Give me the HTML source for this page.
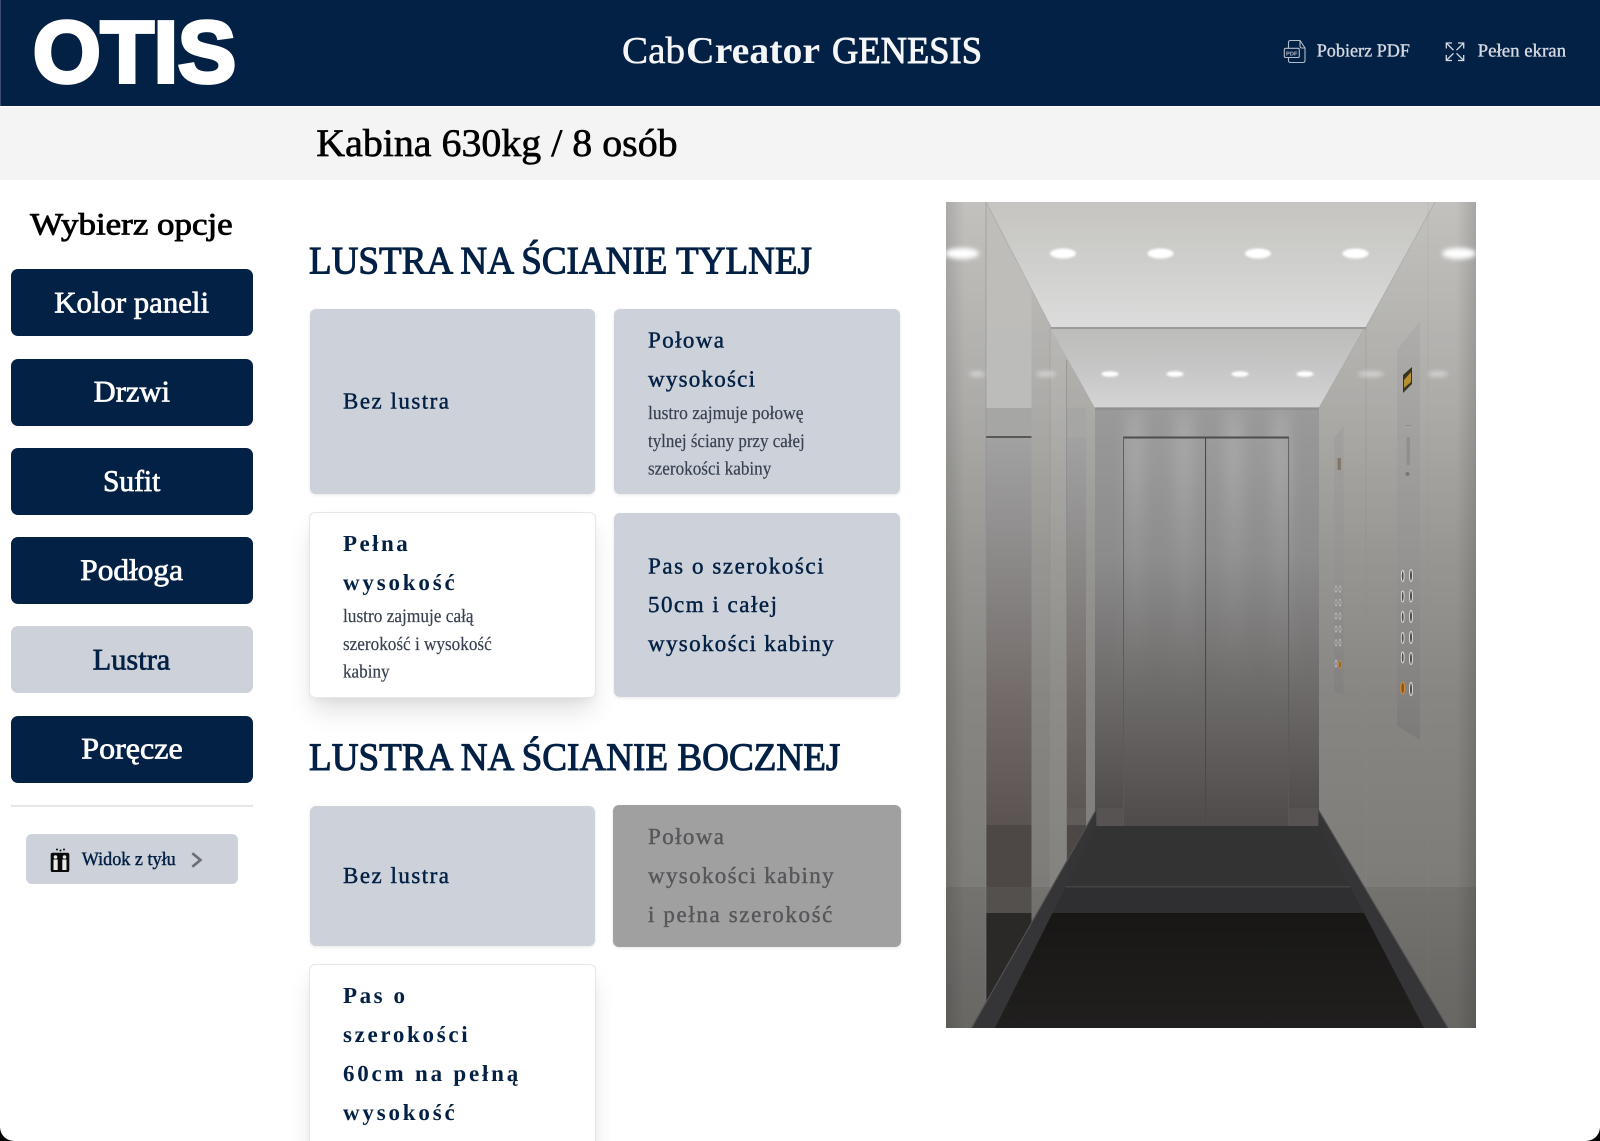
<!DOCTYPE html>
<html lang="pl"><head><meta charset="utf-8"><title>CabCreator GENESIS</title>
<style>
html,body{margin:0;padding:0;width:1600px;height:1141px;overflow:hidden;background:#000}
#page{position:absolute;left:0;top:0;width:1600px;height:1141px;background:#fff;overflow:hidden;border-radius:0 0 14px 14px}
.b{position:absolute;box-sizing:border-box}
.hdr{left:0;top:0;width:1600px;height:106px;background:#032045;border-left:1px solid #3a4f6f}
.sub{left:0;top:107px;width:1600px;height:73px;background:#f4f4f4}
.btn{left:11px;width:241.5px;height:67px;background:#032045;border-radius:7px}
.on{background:#cdd2da}
.card{background:#cdd2da;border-radius:6px;box-shadow:0 1px 3px rgba(0,0,0,.1)}
.sel{background:#fff;border:1px solid #e5e7eb;border-radius:6px;box-shadow:0 16px 26px -4px rgba(0,0,0,.13),0 4px 10px -2px rgba(0,0,0,.05)}
.dis{background:#a0a0a0;border-radius:6px;box-shadow:0 1px 3px rgba(0,0,0,.1)}
svg.o{position:absolute;left:0;top:0;width:1600px;height:1141px;overflow:hidden}
text{font-family:"Liberation Serif",serif;text-rendering:geometricPrecision}
.n{fill:#032045}
.m{stroke:#032045;stroke-width:.45}
.w{fill:#fff;font-size:30px;stroke:#fff;stroke-width:.7}
.t{font-size:23px;fill:#032045;stroke:#032045;stroke-width:.45}
.tb{font-size:23px;font-weight:bold;fill:#032045}
.s{font-size:19px;fill:#374050;stroke:#374050;stroke-width:.2}
.g{font-size:23px;fill:#56575a;stroke:#56575a;stroke-width:.4}
.h{font-size:39px;fill:#032045;stroke:#032045;stroke-width:1.05}
</style></head><body><div id="page">
<div class="b hdr"></div>
<div class="b sub"></div>
<div class="b btn" style="top:269px"></div>
<div class="b btn" style="top:358.5px"></div>
<div class="b btn" style="top:447.5px"></div>
<div class="b btn" style="top:537px"></div>
<div class="b btn on" style="top:626px"></div>
<div class="b btn" style="top:715.5px"></div>
<div class="b" style="left:11px;top:805px;width:241.5px;height:1.5px;background:#e5e7eb"></div>
<div class="b" style="left:26px;top:834px;width:212px;height:50px;background:#cdd2da;border-radius:6px"></div>
<div class="b card" style="left:309.5px;top:309px;width:285.5px;height:185px"></div>
<div class="b card" style="left:614px;top:309px;width:285.5px;height:185px"></div>
<div class="b sel" style="left:309px;top:512px;width:287px;height:186px"></div>
<div class="b card" style="left:614px;top:513px;width:285.5px;height:184px"></div>
<div class="b card" style="left:309.5px;top:806px;width:285.5px;height:140px"></div>
<div class="b dis" style="left:613px;top:804.5px;width:288px;height:142.5px"></div>
<div class="b sel" style="left:309px;top:964px;width:287px;height:240px"></div>

<svg class="o" viewBox="0 0 1600 1141" xmlns="http://www.w3.org/2000/svg">
<defs>
<linearGradient id="st" gradientUnits="userSpaceOnUse" x1="0" y1="202" x2="0" y2="1028"><stop offset="0" stop-color="#c2c1be"/><stop offset=".24" stop-color="#adacA9"/><stop offset=".43" stop-color="#979692"/><stop offset=".6" stop-color="#888682"/><stop offset=".83" stop-color="#7e7c78"/><stop offset="1" stop-color="#716f6b"/></linearGradient>
<linearGradient id="bk" gradientUnits="userSpaceOnUse" x1="0" y1="408" x2="0" y2="826"><stop offset="0" stop-color="#9a9a9a"/><stop offset=".35" stop-color="#8c8c8c"/><stop offset=".7" stop-color="#6b6867"/><stop offset="1" stop-color="#4c4847"/></linearGradient>
<linearGradient id="dr" gradientUnits="userSpaceOnUse" x1="0" y1="437" x2="0" y2="826"><stop offset="0" stop-color="#a0a0a0"/><stop offset=".33" stop-color="#8c8c8c"/><stop offset=".64" stop-color="#6e6c6b"/><stop offset="1" stop-color="#524e4d"/></linearGradient>
<linearGradient id="rf" gradientUnits="userSpaceOnUse" x1="0" y1="437" x2="0" y2="826"><stop offset="0" stop-color="#a2a2a2"/><stop offset=".4" stop-color="#868282"/><stop offset=".68" stop-color="#726a68"/><stop offset="1" stop-color="#5a5352"/></linearGradient>
<linearGradient id="c1" gradientUnits="userSpaceOnUse" x1="0" y1="202" x2="0" y2="327"><stop offset="0" stop-color="#c5c4c0"/><stop offset=".5" stop-color="#cfcfcd"/><stop offset="1" stop-color="#dcdcdc"/></linearGradient>
<linearGradient id="c2" gradientUnits="userSpaceOnUse" x1="0" y1="328" x2="0" y2="408"><stop offset="0" stop-color="#bcbcba"/><stop offset=".5" stop-color="#c6c6c6"/><stop offset="1" stop-color="#d4d4d4"/></linearGradient>
<linearGradient id="vl" gradientUnits="userSpaceOnUse" x1="946" y1="0" x2="965" y2="0"><stop offset="0" stop-color="#000" stop-opacity=".12"/><stop offset="1" stop-color="#000" stop-opacity="0"/></linearGradient>
<linearGradient id="vr" gradientUnits="userSpaceOnUse" x1="1456" y1="0" x2="1476" y2="0"><stop offset="0" stop-color="#000" stop-opacity="0"/><stop offset="1" stop-color="#000" stop-opacity=".14"/></linearGradient>
<linearGradient id="fl" gradientUnits="userSpaceOnUse" x1="0" y1="913" x2="0" y2="1028"><stop offset="0" stop-color="#181716"/><stop offset="1" stop-color="#201f1e"/></linearGradient>
<linearGradient id="band" gradientUnits="userSpaceOnUse" x1="0" y1="380" x2="0" y2="700"><stop offset="0" stop-color="#fff" stop-opacity="0"/><stop offset=".25" stop-color="#fff" stop-opacity=".22"/><stop offset=".55" stop-color="#fff" stop-opacity=".09"/><stop offset="1" stop-color="#fff" stop-opacity="0"/></linearGradient>
<linearGradient id="cop" gradientUnits="userSpaceOnUse" x1="0" y1="330" x2="0" y2="740"><stop offset="0" stop-color="#adacaa"/><stop offset=".57" stop-color="#949391"/><stop offset="1" stop-color="#7c7b79"/></linearGradient>
<filter id="b1" x="-50%" y="-100%" width="200%" height="300%"><feGaussianBlur stdDeviation="1"/></filter>
<filter id="b2" x="-50%" y="-100%" width="200%" height="300%"><feGaussianBlur stdDeviation="2.5"/></filter>
<filter id="b6" x="-100%" y="-50%" width="300%" height="200%"><feGaussianBlur stdDeviation="6"/></filter>
<clipPath id="ci"><rect x="946" y="202" width="530" height="826"/></clipPath>
</defs>
<g clip-path="url(#ci)">
<rect x="946" y="202" width="530" height="826" fill="url(#st)"/>
<!-- left reflections -->
<rect x="986" y="202" width="45.5" height="125" fill="#bebdba"/>
<rect x="986" y="327" width="45.5" height="81" fill="#bcbcbb"/>
<rect x="986" y="408" width="45.5" height="29" fill="#a6a6a5"/>
<rect x="986" y="437" width="45.5" height="389" fill="url(#rf)"/>
<rect x="986" y="825" width="45.5" height="62" fill="#4d4846"/>
<rect x="986" y="887" width="45.5" height="26" fill="#5a5754"/>
<rect x="986" y="913" width="45.5" height="115" fill="#2f2d2c"/>
<rect x="986" y="436" width="45.5" height="2" fill="#5a5855"/>
<rect x="1050" y="328" width="16.7" height="560" fill="#fff" opacity=".05"/>
<rect x="1066.7" y="408" width="19.3" height="30" fill="#a6a6a5"/>
<rect x="1066.7" y="437" width="19.3" height="389" fill="url(#rf)"/>
<rect x="1066.7" y="808" width="19.3" height="17" fill="#615c5a"/>
<rect x="1066.7" y="825" width="19.3" height="40" fill="#4d4846"/>
<line x1="1050" y1="327" x2="1050" y2="890" stroke="#8a8986" stroke-width=".7" opacity=".5"/>
<line x1="1066.7" y1="360" x2="1066.7" y2="860" stroke="#7d7c79" stroke-width=".7" opacity=".7"/>
<line x1="986" y1="202" x2="986" y2="1005" stroke="#8f8e8b" stroke-width=".8" opacity=".7"/>
<!-- back wall -->
<rect x="1095" y="408" width="224" height="418" fill="url(#bk)"/>
<g filter="url(#b6)">
<rect x="1126" y="408" width="18" height="290" fill="url(#band)"/>
<rect x="1174" y="408" width="20" height="290" fill="url(#band)"/>
<rect x="1224" y="408" width="20" height="290" fill="url(#band)"/>
<rect x="1272" y="408" width="18" height="290" fill="url(#band)"/>
</g>
<rect x="1123" y="437" width="166" height="389" fill="url(#dr)" opacity=".45"/>
<rect x="1123" y="436.5" width="166" height="2" fill="#4e4e4e"/>
<rect x="1205" y="437" width="1.1" height="389" fill="#4a4a4a"/>
<rect x="1123" y="437" width=".9" height="389" fill="#5a5a5a"/>
<rect x="1288.2" y="437" width=".9" height="389" fill="#5a5a5a"/>
<rect x="1097" y="808" width="26" height="18" fill="#565352"/>
<rect x="1289" y="808" width="29" height="18" fill="#565352"/>
<!-- ceilings -->
<polygon points="986,202 1435,202 1366,327 1051,327" fill="url(#c1)"/>
<polygon points="1051,327 1366,327 1366,329 1051,329" fill="#9a9a97"/>
<polygon points="1051,329 1364,329 1319,408 1095,408" fill="url(#c2)"/>
<polygon points="1095,407 1319,407 1319,410 1095,410" fill="#8a8a88" opacity=".6"/>
<!-- right wall lines -->
<line x1="1366" y1="327" x2="1366" y2="887" stroke="#8b8a87" stroke-width=".7" opacity=".5"/>
<line x1="1428" y1="202" x2="1428" y2="1028" stroke="#8b8a87" stroke-width=".7" opacity=".22"/>
<line x1="1435" y1="202" x2="1366" y2="327" stroke="#a6a6a3" stroke-width=".8" opacity=".8"/>
<line x1="1364" y1="329" x2="1319" y2="408" stroke="#a6a6a3" stroke-width=".8" opacity=".8"/>
<line x1="986" y1="202" x2="1051" y2="327" stroke="#a6a6a3" stroke-width=".8" opacity=".8"/>
<!-- horizontal darker lower -->
<rect x="946" y="887" width="530" height="141" fill="#000" opacity=".07"/>
<!-- floors -->
<polygon points="1090,826 1324,826 1358,888 1058,888" fill="#343333"/>
<rect x="1052" y="886.5" width="312.6" height="26.5" fill="#2f2f32"/>
<rect x="1052" y="886" width="312.6" height="1.5" fill="#444242"/>
<polygon points="1052,913 1364.6,913 1430,1028 990,1028" fill="url(#fl)"/>
<polygon points="1096,810 1096,826 995,1028 971.5,1028" fill="#353537"/>
<line x1="1096" y1="810" x2="971.5" y2="1028" stroke="#525050" stroke-width="1.2"/>
<polygon points="1318.5,810 1318.5,826 1424,1028 1448,1028" fill="#353537"/>
<line x1="1318.5" y1="810" x2="1448" y2="1028" stroke="#525050" stroke-width="1.2"/>
<!-- vignettes -->
<rect x="946" y="202" width="19" height="826" fill="url(#vl)"/>
<rect x="1456" y="202" width="20" height="826" fill="url(#vr)"/>
<!-- lights -->
<g fill="#fff" filter="url(#b1)">
<ellipse cx="1063" cy="253.5" rx="13" ry="5"/><ellipse cx="1160.5" cy="253.5" rx="13" ry="5"/><ellipse cx="1258" cy="253.5" rx="13" ry="5"/><ellipse cx="1355.5" cy="253.5" rx="13" ry="5"/>
<ellipse cx="1110" cy="374" rx="8.5" ry="2.8"/><ellipse cx="1175" cy="374" rx="8.5" ry="2.8"/><ellipse cx="1240" cy="374" rx="8.5" ry="2.8"/><ellipse cx="1305" cy="374" rx="8.5" ry="2.8"/>
</g>
<g fill="#fff" filter="url(#b2)">
<ellipse cx="962" cy="253.5" rx="17" ry="5.5"/><ellipse cx="1459" cy="253.5" rx="17" ry="5.5"/>
</g>
<g fill="#fff" filter="url(#b2)" opacity=".5">
<ellipse cx="977" cy="374" rx="8" ry="2.5"/><ellipse cx="1046" cy="374" rx="10" ry="2.5"/><ellipse cx="1371" cy="374" rx="13" ry="2.5"/><ellipse cx="1438" cy="374" rx="10" ry="2.5"/>
</g>
<!-- COP panels -->
<polygon points="1397,350 1420,321 1420,740 1397,726" fill="url(#cop)"/>
<polygon points="1403,375 1412,367 1412,384 1403,393" fill="#3a3222"/>
<polygon points="1404,380 1411,372 1411,382 1404,388" fill="#b5902f"/>
<rect x="1405.5" y="425" width="6" height=".8" fill="#8a8a88"/>
<rect x="1406.5" y="437" width="3.5" height="28" fill="#908f8d"/>
<circle cx="1407.5" cy="474" r="2" fill="#777"/>
<polygon points="1334,438 1343.6,426 1343.6,695 1334,691" fill="url(#cop)"/>
<rect x="1337.5" y="458" width="3.5" height="12" fill="#86776a"/>
<g fill="#4f4f4d" stroke="#dedede" stroke-width=".9">
<ellipse cx="1402.7" cy="576" rx="1.4" ry="5.5"/><ellipse cx="1411" cy="575.5" rx="1.5" ry="6"/>
<ellipse cx="1402.7" cy="596.5" rx="1.4" ry="5.5"/><ellipse cx="1411" cy="596" rx="1.5" ry="6"/>
<ellipse cx="1402.7" cy="617" rx="1.4" ry="5.5"/><ellipse cx="1411" cy="616.5" rx="1.5" ry="6"/>
<ellipse cx="1402.7" cy="638" rx="1.4" ry="5.5"/><ellipse cx="1411" cy="637.5" rx="1.5" ry="6"/>
<ellipse cx="1402.7" cy="657.5" rx="1.4" ry="5.5"/><ellipse cx="1411" cy="658.5" rx="1.5" ry="6"/>
<ellipse cx="1411" cy="689" rx="1.5" ry="6.5"/>
</g>
<ellipse cx="1402.7" cy="688" rx="2" ry="6" fill="#7a5a30" stroke="#d98a2a" stroke-width="1.1"/>
<g fill="#5e5e5a" stroke="#d6d6d6" stroke-width=".7">
<ellipse cx="1336" cy="589" rx=".9" ry="3"/><ellipse cx="1340" cy="589" rx=".9" ry="3.2"/>
<ellipse cx="1336" cy="602.7" rx=".9" ry="3"/><ellipse cx="1340" cy="602.7" rx=".9" ry="3.2"/>
<ellipse cx="1336" cy="616" rx=".9" ry="3"/><ellipse cx="1340" cy="616" rx=".9" ry="3.2"/>
<ellipse cx="1336" cy="629" rx=".9" ry="3"/><ellipse cx="1340" cy="629" rx=".9" ry="3.2"/>
<ellipse cx="1336" cy="642.7" rx=".9" ry="3"/><ellipse cx="1340" cy="642.7" rx=".9" ry="3.2"/>
<ellipse cx="1336" cy="663.5" rx=".9" ry="3.4"/>
</g>
<ellipse cx="1340" cy="664.5" rx="1.2" ry="3.6" fill="#7a5a30" stroke="#d98a2a" stroke-width=".8"/>
</g>

<!-- header -->
<text x="33" y="82" font-size="87" textLength="203" lengthAdjust="spacingAndGlyphs" style='font-family:"Liberation Sans",sans-serif;font-weight:bold;fill:#fff;stroke:#fff;stroke-width:4'>OTIS</text>
<g font-size="38" fill="#f5f6f8">
<text x="622" y="63" textLength="63" lengthAdjust="spacingAndGlyphs" stroke="#f5f6f8" stroke-width=".5">Cab</text>
<text x="686" y="63" textLength="134" lengthAdjust="spacingAndGlyphs" font-weight="bold">Creator</text>
<text x="832" y="63" textLength="150" lengthAdjust="spacingAndGlyphs" stroke="#f5f6f8" stroke-width=".9">GENESIS</text>
</g>
<g fill="none" stroke="#b4bcc9" stroke-width="1.1">
<path d="M1288.5 48V42.5Q1288.5 40.5 1290.5 40.5H1300L1305 48V60.5Q1305 62.5 1303 62.5H1290.5Q1288.5 62.5 1288.5 60.5V57.5"/>
<path d="M1300 40.5V46Q1300 48 1302 48H1305"/>
<rect x="1284.3" y="48.3" width="15" height="9.2" rx="1.4"/>
</g>
<text x="1286" y="55.3" font-size="5.6" font-weight="bold" textLength="11.5" lengthAdjust="spacingAndGlyphs" fill="#b4bcc9" style='font-family:"Liberation Sans",sans-serif'>PDF</text>
<text x="1316.7" y="56.7" font-size="18.5" textLength="93.3" lengthAdjust="spacingAndGlyphs" fill="#d5dae1" stroke="#d5dae1" stroke-width=".35">Pobierz PDF</text>
<g fill="none" stroke="#d5dae1" stroke-width="1.3">
<path d="M1446.3 48.5V43H1452M1446.3 43L1453.5 50.2"/>
<path d="M1463.7 48.5V43H1458M1463.7 43L1456.5 50.2"/>
<path d="M1446.3 55V60.5H1452M1446.3 60.5L1453.5 53.3"/>
<path d="M1463.7 55V60.5H1458M1463.7 60.5L1456.5 53.3"/>
</g>
<text x="1477.7" y="56.7" font-size="18.5" textLength="88.3" lengthAdjust="spacingAndGlyphs" fill="#d5dae1" stroke="#d5dae1" stroke-width=".35">Pełen ekran</text>
<text x="316.3" y="156" font-size="39" textLength="361.3" lengthAdjust="spacingAndGlyphs" fill="#000" stroke="#000" stroke-width=".65">Kabina 630kg / 8 osób</text>

<!-- sidebar -->
<text x="30.2" y="234.3" font-size="31" textLength="202.5" lengthAdjust="spacingAndGlyphs" fill="#000" stroke="#000" stroke-width=".85">Wybierz opcje</text>
<text class="w" x="54.3" y="312.4" textLength="154.7" lengthAdjust="spacingAndGlyphs">Kolor paneli</text>
<text class="w" x="93.7" y="401.3" textLength="76.3" lengthAdjust="spacingAndGlyphs">Drzwi</text>
<text class="w" x="103" y="491" textLength="57.3" lengthAdjust="spacingAndGlyphs">Sufit</text>
<text class="w" x="80.3" y="580" textLength="102.7" lengthAdjust="spacingAndGlyphs">Podłoga</text>
<text x="92.7" y="669.7" font-size="30" textLength="77.6" lengthAdjust="spacingAndGlyphs" fill="#032045" stroke="#032045" stroke-width=".7">Lustra</text>
<text class="w" x="81.3" y="758.6" textLength="101.4" lengthAdjust="spacingAndGlyphs">Poręcze</text>
<rect x="50.7" y="852.7" width="18.6" height="19.3" rx="1.8" fill="#0a0a0a"/>
<circle cx="57" cy="849.5" r="1" fill="#0a0a0a"/><circle cx="60.5" cy="850.5" r="1" fill="#0a0a0a"/><circle cx="64" cy="849.5" r="1" fill="#0a0a0a"/>
<g fill="#e8e8e8"><circle cx="55.5" cy="857" r="1.8"/><rect x="53.5" y="859.5" width="4.2" height="10.5"/><circle cx="64.5" cy="857" r="1.8"/><rect x="62.3" y="859.5" width="4.2" height="10.5"/></g>
<text x="81.7" y="865" font-size="19" textLength="94" lengthAdjust="spacingAndGlyphs" class="n m">Widok z tyłu</text>
<path d="M192.3 853.2L200.5 860L192.3 866.8" fill="none" stroke="#6a6c70" stroke-width="2.6"/>

<!-- section 1 -->
<text class="h" x="309" y="273.3" textLength="503" lengthAdjust="spacingAndGlyphs">LUSTRA NA ŚCIANIE TYLNEJ</text>
<text class="t" x="343" y="408.5" textLength="106">Bez lustra</text>
<text class="t" x="648" y="347.5" textLength="76">Połowa</text>
<text class="t" x="648" y="386.5" textLength="107">wysokości</text>
<text class="s" x="648" y="419" textLength="155.5" lengthAdjust="spacingAndGlyphs">lustro zajmuje połowę</text>
<text class="s" x="648" y="447" textLength="156.7" lengthAdjust="spacingAndGlyphs">tylnej ściany przy całej</text>
<text class="s" x="648" y="474.3" textLength="123.3" lengthAdjust="spacingAndGlyphs">szerokości kabiny</text>
<text class="tb" x="343" y="551" textLength="64.7">Pełna</text>
<text class="tb" x="343" y="590" textLength="111.7">wysokość</text>
<text class="s" x="343" y="622" textLength="130.6" lengthAdjust="spacingAndGlyphs">lustro zajmuje całą</text>
<text class="s" x="343" y="650" textLength="148.7" lengthAdjust="spacingAndGlyphs">szerokość i wysokość</text>
<text class="s" x="343" y="677.7" textLength="46.6" lengthAdjust="spacingAndGlyphs">kabiny</text>
<text class="t" x="648" y="573.3" textLength="175.6">Pas o szerokości</text>
<text class="t" x="648" y="612" textLength="129">50cm i całej</text>
<text class="t" x="648" y="651" textLength="185.6">wysokości kabiny</text>

<!-- section 2 -->
<text class="h" x="309" y="770" textLength="531.4" lengthAdjust="spacingAndGlyphs">LUSTRA NA ŚCIANIE BOCZNEJ</text>
<text class="t" x="343" y="883" textLength="106">Bez lustra</text>
<text class="g" x="648" y="844" textLength="76">Połowa</text>
<text class="g" x="648" y="883" textLength="185.6">wysokości kabiny</text>
<text class="g" x="648" y="922" textLength="184.4">i pełna szerokość</text>
<text class="tb" x="343" y="1003" textLength="62">Pas o</text>
<text class="tb" x="343" y="1042" textLength="124.6">szerokości</text>
<text class="tb" x="343" y="1081" textLength="175.2">60cm na pełną</text>
<text class="tb" x="343" y="1120" textLength="111.7">wysokość</text>
</svg>
</div></body></html>
